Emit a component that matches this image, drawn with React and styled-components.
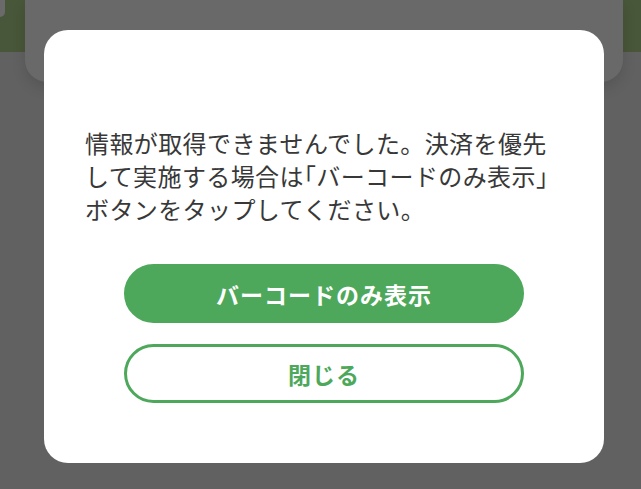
import React from 'react';
import styled, { createGlobalStyle } from 'styled-components';

const GlobalStyle = createGlobalStyle`
  html, body {
    margin: 0;
    padding: 0;
    height: 100%;
    overflow: hidden;
  }
  body {
    font-family: "Noto Sans CJK JP", "Noto Sans", sans-serif;
    background-color: #616161;
  }
`;

const App = () => {
  return (
    <>
      <GlobalStyle />
      <Page>
        <TopRow>
          <SideStub />
          <BehindCard />
        </TopRow>
      </Page>

      <Overlay>
        <Dialog>
          <Message>
            情報が取得できませんでした。決済を優先
            <br />
            して実施する場合は<Bracket>「</Bracket>バーコードのみ表示<Bracket>」</Bracket>
            <br />
            ボタンをタップしてください。
          </Message>

          <Actions>
            <ActionButton primary>バーコードのみ表示</ActionButton>
            <ActionButton>閉じる</ActionButton>
          </Actions>
        </Dialog>
      </Overlay>
    </>
  );
};

const Page = styled.div`
  width: 641px;
  height: 489px;
  background: linear-gradient(to bottom, #485639 0, #485639 52px, #616161 52px);
`;

const TopRow = styled.div`
  display: flex;
  align-items: flex-start;
  gap: 20px;
  padding-right: 18px;
`;

const SideStub = styled.div`
  width: 5px;
  height: 17px;
  background-color: #6a6a6a;
  border-bottom-right-radius: 6px;
`;

const BehindCard = styled.div`
  flex: 1;
  height: 82px;
  background-color: #696969;
  border-bottom-left-radius: 22px;
  border-bottom-right-radius: 22px;
  box-shadow: 0 6px 14px rgba(0, 0, 0, 0.12);
`;

const Overlay = styled.div`
  position: fixed;
  inset: 0;
  display: flex;
  align-items: flex-start;
  padding: 30px 37px 0 44px;
`;

const Dialog = styled.div`
  box-sizing: border-box;
  width: 560px;
  height: 433px;
  background-color: #ffffff;
  border-radius: 24px;
  padding: 96px 41px 0 41px;
  display: flex;
  flex-direction: column;
`;

const Message = styled.p`
  margin: 0;
  font-size: 24px;
  line-height: 33px;
  letter-spacing: 0.4px;
  color: #383838;
  white-space: nowrap;
`;

const Bracket = styled.span`
  font-feature-settings: "halt";
`;

const Actions = styled.div`
  display: flex;
  flex-direction: column;
  align-items: center;
  gap: 21px;
  margin-top: 39px;
`;

const ActionButton = styled.button`
  box-sizing: border-box;
  width: 400px;
  height: 59px;
  border-radius: 30px;
  border: 3px solid #4da85b;
  background-color: ${p => (p.primary ? '#4da85b' : '#ffffff')};
  color: ${p => (p.primary ? '#ffffff' : '#4da85b')};
  font-family: "Noto Sans CJK JP", "Noto Sans", sans-serif;
  font-size: 23px;
  font-weight: 700;
  letter-spacing: 1px;
  cursor: pointer;
  padding: 0;
`;

export default App;
